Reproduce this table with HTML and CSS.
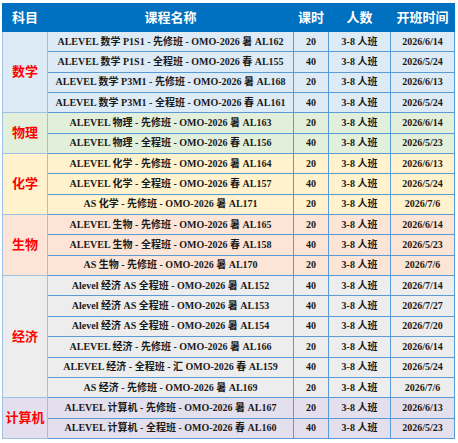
FILE: index.html
```html
<!DOCTYPE html>
<html lang="zh-CN">
<head>
    <meta charset="UTF-8">
    <meta name="viewport" content="width=device-width, initial-scale=1.0">
    <title>课程安排</title>
    <link rel="stylesheet" href="styles.css">
</head>
<body>
    <table class="course-table">
        <colgroup>
            <col class="col-subject">
            <col class="col-name">
            <col class="col-hours">
            <col class="col-size">
            <col class="col-date">
        </colgroup>
        <thead>
            <tr>
                <th>科目</th>
                <th>课程名称</th>
                <th>课时</th>
                <th>人数</th>
                <th>开班时间</th>
            </tr>
        </thead>
        <tbody class="group-math">
            <tr><td class="subject" rowspan="4">数学</td><td>ALEVEL 数学 P1S1 - 先修班 - OMO-2026 暑 AL162</td><td>20</td><td>3-8 人班</td><td>2026/6/14</td></tr>
            <tr><td>ALEVEL 数学 P1S1 - 全程班 - OMO-2026 春 AL155</td><td>40</td><td>3-8 人班</td><td>2026/5/24</td></tr>
            <tr><td>ALEVEL 数学 P3M1 - 先修班 - OMO-2026 暑 AL168</td><td>20</td><td>3-8 人班</td><td>2026/6/13</td></tr>
            <tr><td>ALEVEL 数学 P3M1 - 全程班 - OMO-2026 春 AL161</td><td>40</td><td>3-8 人班</td><td>2026/5/24</td></tr>
        </tbody>
        <tbody class="group-physics">
            <tr><td class="subject" rowspan="2">物理</td><td>ALEVEL 物理 - 先修班 - OMO-2026 暑 AL163</td><td>20</td><td>3-8 人班</td><td>2026/6/14</td></tr>
            <tr><td>ALEVEL 物理 - 全程班 - OMO-2026 春 AL156</td><td>40</td><td>3-8 人班</td><td>2026/5/23</td></tr>
        </tbody>
        <tbody class="group-chem">
            <tr><td class="subject" rowspan="3">化学</td><td>ALEVEL 化学 - 先修班 - OMO-2026 暑 AL164</td><td>20</td><td>3-8 人班</td><td>2026/6/13</td></tr>
            <tr><td>ALEVEL 化学 - 全程班 - OMO-2026 春 AL157</td><td>40</td><td>3-8 人班</td><td>2026/5/24</td></tr>
            <tr><td>AS 化学 - 先修班 - OMO-2026 暑 AL171</td><td>20</td><td>3-8 人班</td><td>2026/7/6</td></tr>
        </tbody>
        <tbody class="group-bio">
            <tr><td class="subject" rowspan="3">生物</td><td>ALEVEL 生物 - 先修班 - OMO-2026 暑 AL165</td><td>20</td><td>3-8 人班</td><td>2026/6/14</td></tr>
            <tr><td>ALEVEL 生物 - 全程班 - OMO-2026 春 AL158</td><td>40</td><td>3-8 人班</td><td>2026/5/23</td></tr>
            <tr><td>AS 生物 - 先修班 - OMO-2026 暑 AL170</td><td>20</td><td>3-8 人班</td><td>2026/7/6</td></tr>
        </tbody>
        <tbody class="group-econ">
            <tr><td class="subject" rowspan="6">经济</td><td>Alevel 经济 AS 全程班 - OMO-2026 暑 AL152</td><td>40</td><td>3-8 人班</td><td>2026/7/14</td></tr>
            <tr><td>Alevel 经济 AS 全程班 - OMO-2026 暑 AL153</td><td>40</td><td>3-8 人班</td><td>2026/7/27</td></tr>
            <tr><td>Alevel 经济 AS 全程班 - OMO-2026 暑 AL154</td><td>40</td><td>3-8 人班</td><td>2026/7/20</td></tr>
            <tr><td>ALEVEL 经济 - 先修班 - OMO-2026 暑 AL166</td><td>20</td><td>3-8 人班</td><td>2026/6/14</td></tr>
            <tr><td>ALEVEL 经济 - 全程班 - 汇 OMO-2026 春 AL159</td><td>40</td><td>3-8 人班</td><td>2026/5/24</td></tr>
            <tr><td>AS 经济 - 先修班 - OMO-2026 暑 AL169</td><td>20</td><td>3-8 人班</td><td>2026/7/6</td></tr>
        </tbody>
        <tbody class="group-cs">
            <tr><td class="subject" rowspan="2">计算机</td><td>ALEVEL 计算机 - 先修班 - OMO-2026 暑 AL167</td><td>20</td><td>3-8 人班</td><td>2026/6/13</td></tr>
            <tr><td>ALEVEL 计算机 - 全程班 - OMO-2026 春 AL160</td><td>40</td><td>3-8 人班</td><td>2026/5/23</td></tr>
        </tbody>
    </table>
</body>
</html>
```

FILE: styles.css
```css
body {
    margin: 0;
    padding: 3px 0 0 2px;
    background: #fff;
    font-family: "Liberation Serif", "Noto Sans CJK SC", serif;
}

.course-table {
    border-collapse: collapse;
    table-layout: fixed;
    width: 452px;
    border: 1px solid #9bc2e6;
}

.col-subject { width: 45px; }
.col-name { width: 246px; }
.col-hours { width: 35px; }
.col-size { width: 62px; }
.col-date { width: 64px; }

.course-table th {
    height: 27px;
    padding: 0;
    background: #0070c0;
    color: #fff;
    font-size: 13px;
    font-weight: bold;
    line-height: 14px;
    text-align: center;
    border: 1px solid #0070c0;
}

.course-table td {
    height: 19.35px;
    padding: 0;
    font-size: 10px;
    line-height: 12px;
    font-weight: bold;
    color: #1a1a1a;
    text-align: center;
    white-space: nowrap;
    border: 1px solid #5b9bd5;
}

.course-table td.subject {
    color: #ff0000;
    font-size: 13px;
    line-height: 14px;
    border-color: #9bc2e6;
}

.group-math td { background: #ddebf7; }
.group-physics td { background: #e2efda; }
.group-chem td { background: #fff2cc; }
.group-bio td { background: #fce4d6; }
.group-econ td { background: #ededed; }
.group-cs td { background: #e4dfec; }
```
